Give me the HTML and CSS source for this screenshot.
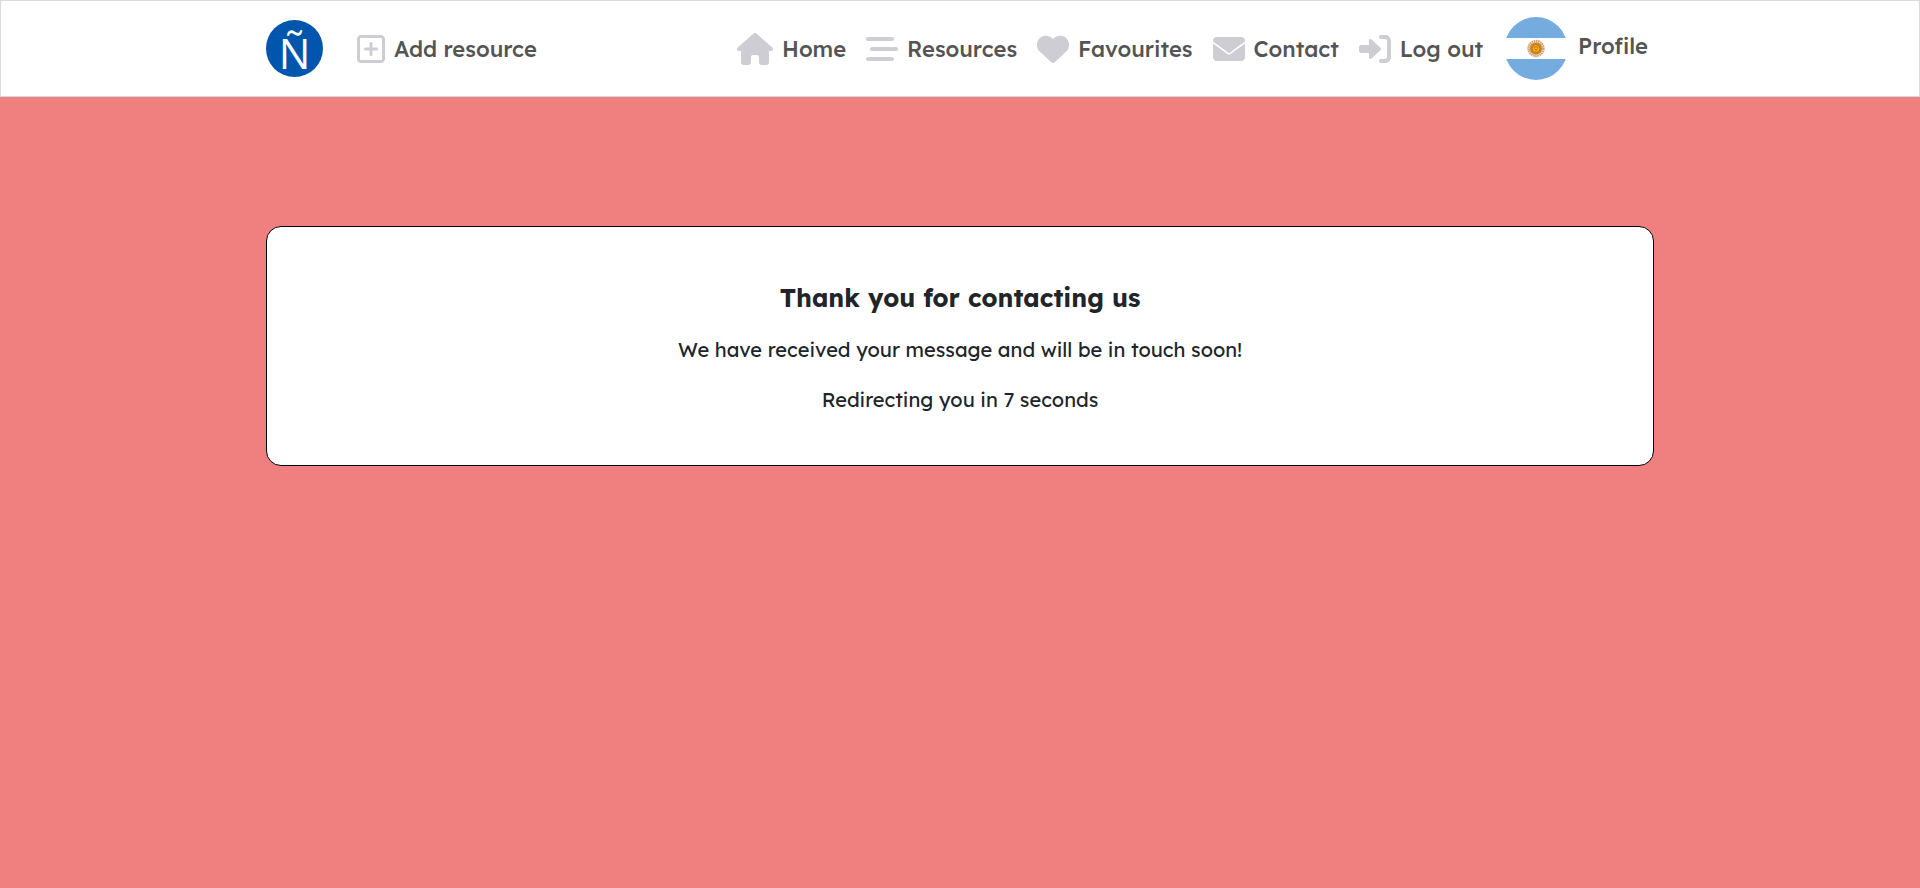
FILE: index.html
```html
<!DOCTYPE html>
<html lang="en">
<head>
<meta charset="utf-8">
<meta name="viewport" content="width=device-width, initial-scale=1">
<title>Thank you</title>
<link rel="stylesheet" href="styles.css">
</head>
<body>
<header class="site-header">
  <nav class="nav container" aria-label="Main">
    <div class="nav-group nav-start">
      <a class="logo" href="#" aria-label="Home page"><span class="logo-letter">Ñ</span></a>
      <a class="nav-link" href="#">
        <svg class="icon" viewBox="0 0 448 512" aria-hidden="true"><path d="M64 80c-8.800 0-16 7.200-16 16V416c0 8.800 7.200 16 16 16H384c8.800 0 16-7.200 16-16V96c0-8.800-7.200-16-16-16H64zM0 96C0 60.700 28.700 32 64 32H384c35.300 0 64 28.700 64 64V416c0 35.300-28.700 64-64 64H64c-35.300 0-64-28.700-64-64V96zM200 344V280H136c-13.300 0-24-10.700-24-24s10.700-24 24-24h64V168c0-13.300 10.700-24 24-24s24 10.700 24 24v64h64c13.300 0 24 10.700 24 24s-10.700 24-24 24H248v64c0 13.300-10.700 24-24 24s-24-10.700-24-24z"/></svg>
        <span>Add resource</span>
      </a>
    </div>
    <div class="nav-group nav-end">
      <a class="nav-link" href="#">
        <svg class="icon" viewBox="0 0 576 512" aria-hidden="true"><path d="M575.800 255.500c0 18-15 32.100-32 32.100h-32l.7 160.200c0 2.700-.2 5.400-.5 8.100V472c0 22.100-17.900 40-40 40H392c-22.100 0-40-17.900-40-40V384c0-17.700-14.300-32-32-32H256c-17.700 0-32 14.300-32 32v88c0 22.100-17.900 40-40 40H104c-22.100 0-40-17.900-40-40V287.600H32c-18 0-32-14-32-32.100c0-9 3-17 10-24L266.400 8c7-7 15-8 22-8s15 2 21 7L564.800 231.500c8 7 12 15 11 24z"/></svg>
        <span>Home</span>
      </a>
      <a class="nav-link" href="#">
        <svg class="icon" viewBox="0 0 512 512" aria-hidden="true"><path d="M0 96C0 78.300 14.300 64 32 64H416c17.700 0 32 14.300 32 32s-14.300 32-32 32H32C14.300 128 0 113.700 0 96zM64 256c0-17.700 14.300-32 32-32H480c17.700 0 32 14.300 32 32s-14.300 32-32 32H96c-17.700 0-32-14.300-32-32zM448 416c0 17.700-14.300 32-32 32H32c-17.700 0-32-14.300-32-32s14.300-32 32-32H416c17.700 0 32 14.300 32 32z"/></svg>
        <span>Resources</span>
      </a>
      <a class="nav-link" href="#">
        <svg class="icon" viewBox="0 0 512 512" aria-hidden="true"><path d="M47.600 300.400L228.300 469.100c7.500 7 17.400 10.900 27.700 10.900s20.200-3.900 27.700-10.900L464.400 300.400c30.400-28.300 47.600-68 47.600-109.500v-5.800c0-69.900-50.500-129.500-119.400-141C347 36.500 300.600 51.400 268 84L256 96 244 84c-32.600-32.600-79-47.500-124.600-39.900C50.500 55.600 0 115.200 0 185.100v5.800c0 41.500 17.200 81.200 47.600 109.500z"/></svg>
        <span>Favourites</span>
      </a>
      <a class="nav-link" href="#">
        <svg class="icon" viewBox="0 0 512 512" aria-hidden="true"><rect y="64" width="512" height="384" rx="64"/><path d="M-12 143L238 326q18 12 36 0L524 143" fill="none" stroke="#fff" stroke-width="26"/></svg>
        <span>Contact</span>
      </a>
      <a class="nav-link" href="#">
        <svg class="icon" viewBox="0 0 512 512" aria-hidden="true"><path d="M344.700 238.500l-144.100-136C193.700 95.970 183.400 94.170 174.600 97.950C165.800 101.800 160.100 110.400 160.100 120V192H32.020C14.330 192 0 206.300 0 224v64c0 17.680 14.330 32 32.020 32h128.100v72c0 9.578 5.707 18.250 14.510 22.050c8.803 3.781 19.030 1.984 26-4.594l144.100-136C354.300 264.400 354.300 247.600 344.700 238.500zM416 32h-64c-17.670 0-32 14.330-32 32s14.330 32 32 32h64c17.670 0 32 14.330 32 32v256c0 17.670-14.330 32-32 32h-64c-17.670 0-32 14.330-32 32s14.330 32 32 32h64c53.020 0 96-42.980 96-96V128C512 74.980 469 32 416 32z"/></svg>
        <span>Log out</span>
      </a>
      <a class="nav-link profile" href="#">
        <svg class="flag" viewBox="0 0 60 63" aria-hidden="true">
          <clipPath id="flag-round"><circle cx="30" cy="31.500" r="31.500"/></clipPath>
          <g clip-path="url(#flag-round)">
            <path fill="#74acdf" d="M0 0h60v63H0z"/>
            <path fill="#fff" d="M0 21h60v21H0z"/>
            <circle cx="30" cy="31.500" r="7.200" fill="none" stroke="#d9a577" stroke-width="3" stroke-dasharray="1.600 .5"/>
            <circle cx="30" cy="31.500" r="6" fill="#c9813b"/>
            <circle cx="30" cy="31.500" r="4" fill="#f6b40e" stroke="#c07a10"/>
            <path d="M27.500 30h5M28.500 31.500l1.500 2 1.500-2" fill="none" stroke="#a35f08" stroke-width=".8"/>
          </g>
        </svg>
        <span class="profile-name">Profile</span>
      </a>
    </div>
  </nav>
</header>
<main class="container">
  <section class="card">
    <h1 class="card-title">Thank you for contacting us</h1>
    <p class="card-text">We have received your message and will be in touch soon!</p>
    <p class="card-text">Redirecting you in 7 seconds</p>
  </section>
</main>
</body>
</html>
```
FILE: styles.css
```css
* { box-sizing: border-box; }

body {
  margin: 0;
  min-height: 100vh;
  background: #f08080;
  color: #212529;
  font-family: Lexend, Inter, "Open Sans", sans-serif;
  font-size: 20px;
  line-height: 30px;
}

.container {
  width: 100%;
  max-width: 1388px;
  margin: 0 auto;
}

.site-header {
  background: #fff;
  border: 1px solid #d9d9de;
}

.nav {
  display: flex;
  align-items: center;
  justify-content: space-between;
  padding: 16px 6px 16px 0;
}

.nav-group {
  display: flex;
  align-items: center;
}

.nav-start { gap: 34px; }
.nav-end { gap: 20px; }

.nav-link {
  display: flex;
  align-items: center;
  gap: 9px;
  color: #545454;
  font-size: 22px;
  font-weight: 500;
  text-decoration: none;
  white-space: nowrap;
}

.icon {
  height: 32px;
  fill: #cecdd3;
}

.logo {
  display: flex;
  align-items: center;
  justify-content: center;
  width: 57px;
  height: 57px;
  padding-top: 8px;
  border-radius: 50%;
  background: #0056ac;
  color: #fff;
  font-family: "Open Sans", sans-serif;
  font-size: 42px;
  line-height: 48px;
  text-decoration: none;
}

.flag {
  width: 60px;
  height: 63px;
}

.profile {
  gap: 12px;
  margin-left: 3px;
}

.profile-name { padding-bottom: 6px; }

.card {
  margin-top: 129px;
  padding: 55px 24px 50px;
  border: 1px solid #000;
  border-radius: 15px;
  background: #fff;
  text-align: center;
}

.card-title {
  margin: 0 0 21px;
  font-size: 25px;
  font-weight: 700;
  line-height: 32px;
}

.card-text { margin: 0 0 20px; }

.card-text:last-child { margin-bottom: 0; }
```
